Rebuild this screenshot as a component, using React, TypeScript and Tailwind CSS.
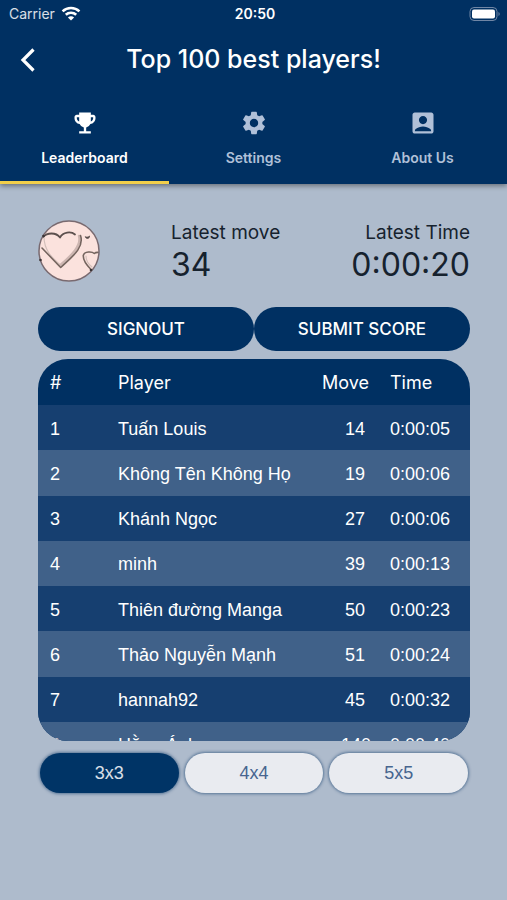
import { useState } from "react";
import { MdEmojiEvents, MdSettings, MdAccountBox } from "react-icons/md";

const tabs = [
  { label: "Leaderboard", Icon: MdEmojiEvents },
  { label: "Settings", Icon: MdSettings },
  { label: "About Us", Icon: MdAccountBox },
];

const players = [
  { name: "Tuấn Louis", move: 14, time: "0:00:05" },
  { name: "Không Tên Không Họ", move: 19, time: "0:00:06" },
  { name: "Khánh Ngọc", move: 27, time: "0:00:06" },
  { name: "minh", move: 39, time: "0:00:13" },
  { name: "Thiên đường Manga", move: 50, time: "0:00:23" },
  { name: "Thảo Nguyễn Mạnh", move: 51, time: "0:00:24" },
  { name: "hannah92", move: 45, time: "0:00:32" },
  { name: "Hằng Ánh", move: 140, time: "0:00:40" },
];

const sizes = ["3x3", "4x4", "5x5"];

function StatusBar() {
  return (
    <div className="grid h-[27px] grid-cols-3 items-center pr-[6px] pl-[9px] text-[14px]">
      <div className="flex items-center gap-[6px]">
        <span className="text-white/85">Carrier</span>
        <svg viewBox="0 0 20 15" className="h-[15px] w-5" fill="none" stroke="white" strokeWidth="2.6" aria-hidden="true">
          <path d="M1.6 5.4C6.3.9 13.7.9 18.4 5.4" />
          <path d="M4.8 8.8c2.9-2.8 7.5-2.8 10.4 0" />
          <path d="M10 14.6 6.9 11.5c1.7-1.7 4.5-1.7 6.2 0z" fill="white" stroke="none" />
        </svg>
      </div>
      <span className="text-center font-semibold">20:50</span>
      <svg viewBox="0 0 32 14" className="h-[14px] w-8 justify-self-end" aria-hidden="true">
        <rect x="1" y=".5" width="27" height="13" rx="4" fill="none" stroke="#7086a5" />
        <rect x="3" y="2.5" width="23" height="9" rx="2" fill="white" />
        <path d="M29.500 5v4c1.6-.5 1.6-3.500 0-4z" fill="#7086a5" />
      </svg>
    </div>
  );
}

function Avatar() {
  return (
    <svg viewBox="0 0 62 62" className="h-[62px] w-[62px]" role="img" aria-label="Avatar">
      <defs>
        <clipPath id="avatar-clip">
          <circle cx="31" cy="31" r="30" />
        </clipPath>
      </defs>
      <circle cx="31" cy="31" r="30" fill="#fbe2dd" />
      <g clipPath="url(#avatar-clip)" fill="none" strokeLinecap="round" strokeLinejoin="round">
        <path d="M6 17C6 30 14 38 22.500 45" stroke="#d3bfba" strokeWidth="1.2" />
        <path d="M41 16c3 10-8 20-18.500 29" stroke="#cdb6b1" strokeWidth="2.500" />
        <path d="M5 17c4-4.500 13-5 17 .5 3-5.500 11-6.500 15-3" stroke="#5c504e" strokeWidth="1.800" />
        <path d="M42.500 15.500c4 12-8 21-19.800 32L4 28" stroke="#75655f" strokeWidth="1.600" />
        <path d="M47.500 17c1 .2 3.500.2 4-1 .3 1.500-1 2.500-2 2.500s-1.500-.5-2-1.500z" fill="#5c504e" stroke="#5c504e" strokeWidth=".8" />
        <path d="M53 49.500c-4-4-8-9-7.700-14 1-4.500 9-4 11-2 1-1 3-1.300 5-1" stroke="#75655f" strokeWidth="1.600" />
        <path d="M54 47c-4-3-6-7-6-11" stroke="#d3bfba" strokeWidth="1.200" />
      </g>
      <circle cx="31" cy="31" r="30" fill="none" stroke="#796a70" strokeWidth="1.500" />
      <circle cx="5.500" cy="16" r="1.300" fill="#3a3335" />
      <circle cx="2.500" cy="40" r="1.300" fill="#3a3335" />
      <circle cx="53" cy="50" r="1.300" fill="#3a3335" />
    </svg>
  );
}

export default function App() {
  const [tab, setTab] = useState("Leaderboard");
  const [size, setSize] = useState("3x3");

  return (
    <div className="min-h-screen bg-[#aebbcc] font-['Inter',sans-serif]">
      <header className="bg-[#003062] text-white shadow-[0_2px_5px_rgba(0,0,0,0.4)]">
        <StatusBar />
        <div className="grid h-[65px] grid-cols-[56px_1fr_56px] items-center">
          <button type="button" aria-label="Back" className="flex justify-center">
            <svg viewBox="0 0 16 24" className="h-6 w-4" fill="none" stroke="white" strokeWidth="3.2" aria-hidden="true">
              <path d="M13.500 1.500 3 12l10.500 10.500" />
            </svg>
          </button>
          <h1 className="text-center text-[25px] font-medium">Top 100 best players!</h1>
        </div>
        <nav className="grid h-[92px] grid-cols-3">
          {tabs.map(({ label, Icon }) => (
            <button
              key={label}
              type="button"
              onClick={() => setTab(label)}
              className={
                tab === label
                  ? "flex flex-col items-center border-b-3 border-[#f2cf4a] pt-[17px] text-white"
                  : "flex flex-col items-center border-b-3 border-transparent pt-[17px] text-[#b0c0d8]"
              }
            >
              <Icon className="size-7" />
              <span className="mt-[11px] text-[14px] leading-5 font-semibold">{label}</span>
            </button>
          ))}
        </nav>
      </header>

      <main className="pt-9 pr-[37px] pl-[38px]">
        <section className="flex h-[62px] justify-between text-[#16222e]">
          <Avatar />
          <div>
            <p className="text-[19px] leading-[26px]">Latest move</p>
            <p className="text-[32px] leading-[38px]">34</p>
          </div>
          <div className="text-right">
            <p className="text-[19px] leading-[26px]">Latest Time</p>
            <p className="text-[32px] leading-[38px]">0:00:20</p>
          </div>
        </section>

        <div className="mt-[25px] grid grid-cols-2 text-[17px] font-medium text-white">
          <button type="button" className="h-11 rounded-full bg-[#003062] pt-[2px]">SIGNOUT</button>
          <button type="button" className="h-11 rounded-full bg-[#003062] pt-[2px]">SUBMIT SCORE</button>
        </div>

        <div className="mt-2 h-[382px] overflow-hidden rounded-[30px] bg-[#003062]">
          <table className="h-[408px] w-full table-fixed text-[18px] text-white">
            <thead>
              <tr className="h-[46px] text-left">
                <th className="w-20 pl-3 font-normal">#</th>
                <th className="font-normal">Player</th>
                <th className="w-[60px] text-right font-normal">Move</th>
                <th className="w-[101px] pl-[21px] font-normal">Time</th>
              </tr>
            </thead>
            <tbody className="font-['Liberation_Sans',sans-serif]">
              {players.map((p, i) => (
                <tr key={p.name} className={i % 2 ? "bg-[#406189]" : "bg-[#163f70]"}>
                  <td className="pt-[3px] pl-3">{i + 1}</td>
                  <td className="pt-[3px] whitespace-nowrap">{p.name}</td>
                  <td className="pt-[3px] text-right">
                    <span className="inline-block w-[28px] text-center">{p.move}</span>
                  </td>
                  <td className="pt-[3px] pl-[21px]">{p.time}</td>
                </tr>
              ))}
            </tbody>
          </table>
        </div>

        <div className="mt-3 grid grid-cols-3 gap-[6px] px-[2px] font-['Liberation_Sans',sans-serif] text-[18px]">
          {sizes.map((s) => (
            <button
              key={s}
              type="button"
              onClick={() => setSize(s)}
              className={
                size === s
                  ? "h-10 rounded-full bg-[#003466] text-white/85 shadow-[0_0_3px_1px_rgba(0,48,98,0.5)]"
                  : "h-10 rounded-full bg-[#e9ebf0] text-[#47658f] shadow-[0_0_3px_1px_rgba(0,48,98,0.5)]"
              }
            >
              {s}
            </button>
          ))}
        </div>
      </main>
    </div>
  );
}
